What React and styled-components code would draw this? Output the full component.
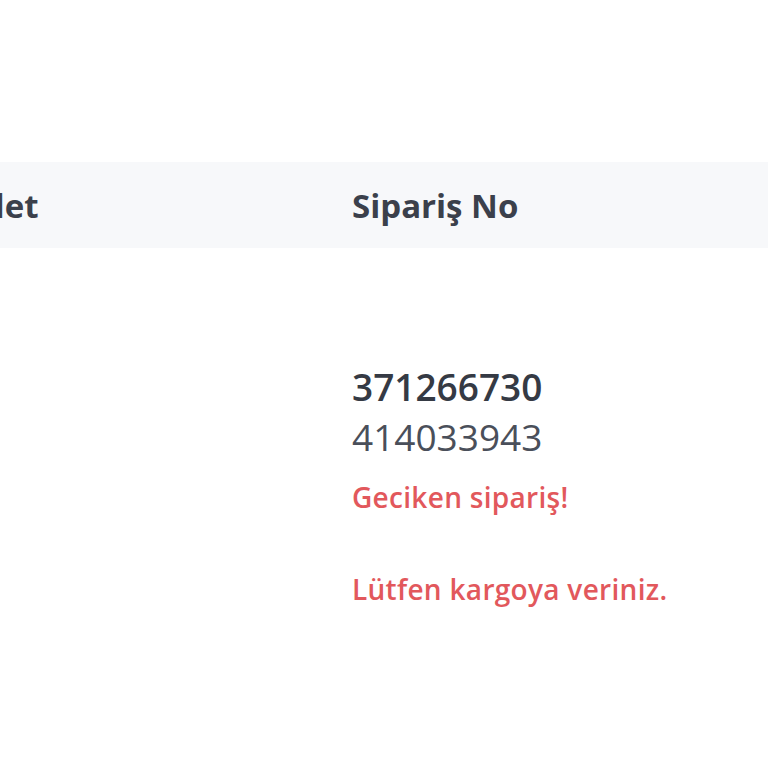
import React from "react";
import styled, { createGlobalStyle } from "styled-components";

const Global = createGlobalStyle`
  body {
    margin: 0;
    background: #ffffff;
  }
`;

const Page = styled.div`
  width: 768px;
  height: 768px;
  overflow: hidden;
  padding-top: 162px;
  box-sizing: border-box;
`;

const Table = styled.div`
  display: grid;
  grid-template-columns: 391px 1fr;
  margin-left: -39px;
`;

const HeadCell = styled.div`
  height: 86px;
  display: flex;
  align-items: center;
  background: #f7f8fa;
  font-family: "Open Sans", "Noto Sans", sans-serif;
  font-weight: 700;
  font-size: 33px;
  color: #3b404b;
`;

const Cell = styled.div`
  padding-top: 114px;
  display: flex;
  flex-direction: column;
`;

const Number = styled.div`
  font-family: "Open Sans", "Liberation Sans", sans-serif;
  font-size: 37px;
  line-height: 50px;
  font-weight: ${p => (p.bold ? 600 : 400)};
  color: ${p => (p.bold ? "#353a44" : "#4a4f5a")};
`;

const Warning = styled.div`
  font-family: "Open Sans", "Noto Sans", sans-serif;
  font-weight: 600;
  font-size: 28px;
  letter-spacing: 0.3px;
  color: #e2585c;
  margin-top: ${p => p.gap || "0px"};
`;

export default function App() {
  return (
    <Page>
      <Global />
      <Table>
        <HeadCell>Adet</HeadCell>
        <HeadCell>Sipariş No</HeadCell>
        <Cell />
        <Cell>
          <Number bold>371266730</Number>
          <Number>414033943</Number>
          <Warning gap="16px">Geciken sipariş!</Warning>
          <Warning gap="54px">Lütfen kargoya veriniz.</Warning>
        </Cell>
      </Table>
    </Page>
  );
}
